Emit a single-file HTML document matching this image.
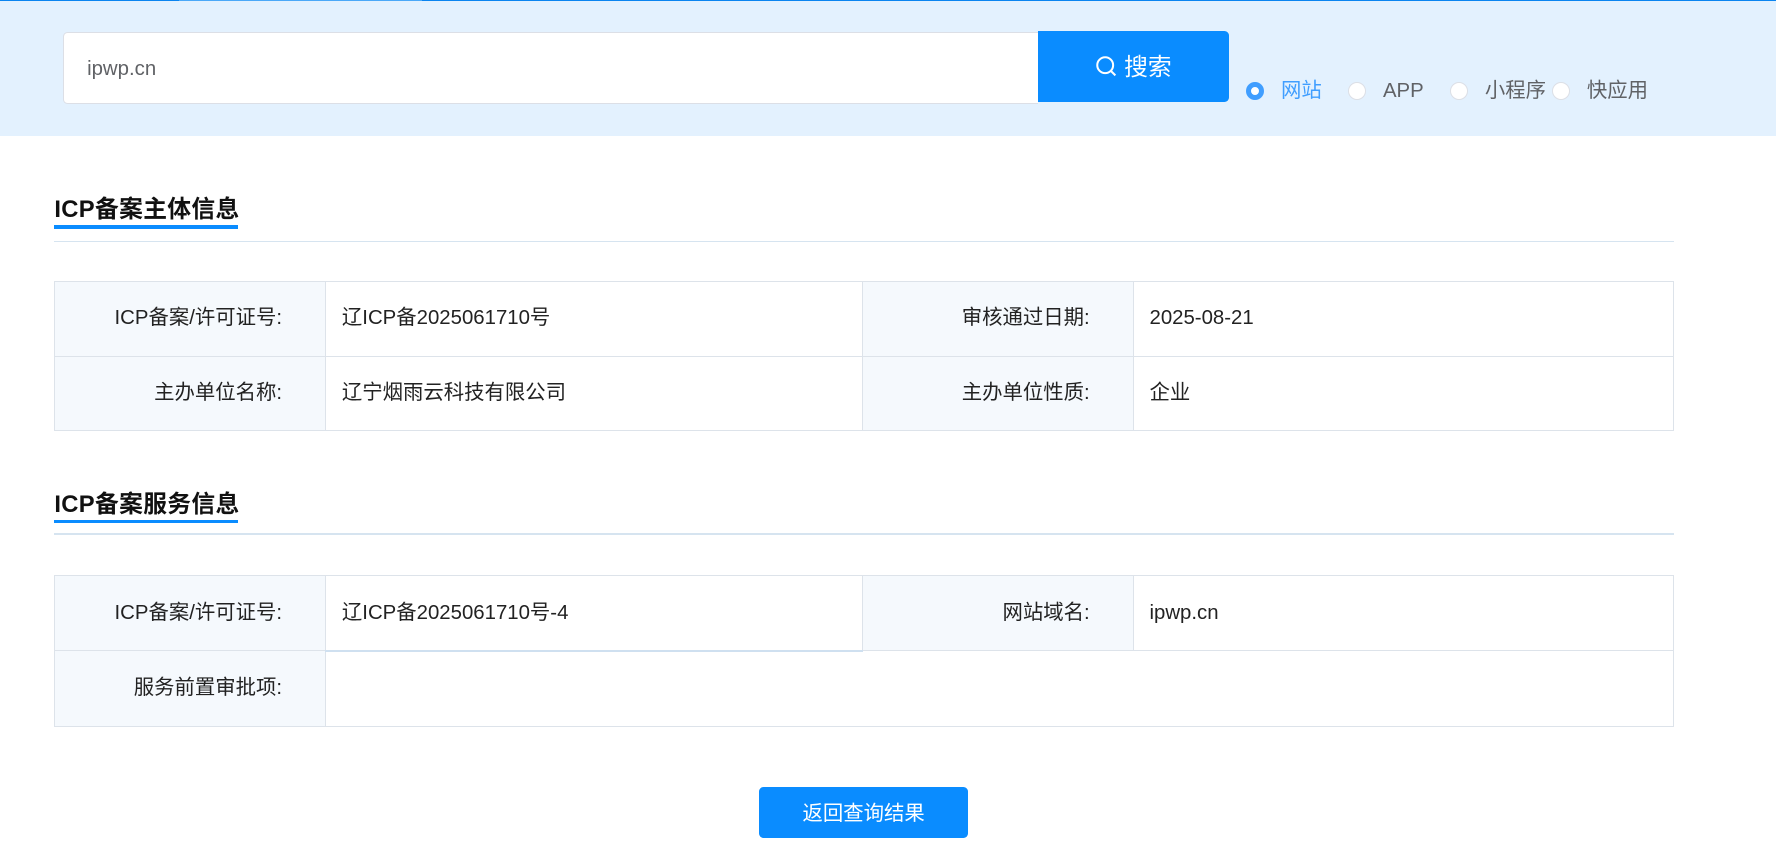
<!DOCTYPE html>
<html><head><meta charset="utf-8"><style>
html,body{margin:0;padding:0;background:#fff;overflow:hidden}
body{width:1776px;height:867px}
#w{width:1568px;height:766px;zoom:1.13265;position:relative;font-family:"Liberation Sans","Noto Sans CJK SC",sans-serif;color:#222}
.a{position:absolute}
.hdr{left:0;top:0;width:1568px;height:120px;background:#e3f1fe}
.topl{left:0;top:0;width:1568px;height:1px;background:#0a84f0}
.inp{left:56px;top:28px;background:#fff;border:1px solid #dcdfe6;border-right:none;border-radius:4px 0 0 4px;font-size:18px;color:#606266;line-height:64px;padding-left:20px;box-sizing:border-box;width:860px;height:64px}
.btn{left:916px;top:27px;width:169px;height:63px;background:#0a8cff;border-radius:0 4px 4px 0;color:#fff;font-size:21px;line-height:66px;text-align:center}
.rad{top:72px;width:16px;height:16px;border-radius:50%;background:#fff;border:1px solid #dcdfe6;box-sizing:border-box}
.rl{top:69px;font-size:18px;color:#606266;line-height:24px}
.title{left:48px;font-size:21px;font-weight:bold;color:#111;letter-spacing:0.3px}
.ul{left:48px;width:162px;height:3px;background:#0a8cff}
.ln{left:48px;width:1430px;height:1px;background:#d6e4f0}
table{position:absolute;left:48px;width:1430px;border-collapse:collapse;font-size:18px;table-layout:fixed}
td{border:1px solid #dde3ea;height:65px;padding:0 14px;color:#222;line-height:22px;vertical-align:middle}
td.l{background:#f5f9fd;text-align:right;padding-right:38px}
.back{left:670px;top:695px;width:185px;height:45px;background:#0a8cff;border-radius:4px;color:#fff;font-size:18px;line-height:49px;text-align:center}
</style></head><body><div id="w">
<div class="a hdr"></div><div class="a topl"></div>
<div class="a" style="left:158px;top:0;width:215px;height:1px;background:#4aa8f8"></div>
<div class="a inp">ipwp.cn</div>
<div class="a btn"><svg width="20" height="20" viewBox="0 0 20 20" style="vertical-align:-3px;margin-right:6px"><circle cx="9" cy="9" r="7" fill="none" stroke="#fff" stroke-width="1.8"/><path d="M14 14l4 4" stroke="#fff" stroke-width="1.8"/></svg>搜索</div>
<div class="a rad" style="left:1100px;border:5px solid #409eff"></div><div class="a rl" style="left:1131px;color:#409eff">网站</div>
<div class="a rad" style="left:1190px"></div><div class="a rl" style="left:1221px">APP</div>
<div class="a rad" style="left:1280px"></div><div class="a rl" style="left:1311px">小程序</div>
<div class="a rad" style="left:1370px"></div><div class="a rl" style="left:1401px">快应用</div>

<div class="a title" style="top:167px">ICP备案主体信息</div>
<div class="a ul" style="top:199px"></div><div class="a ln" style="top:213px"></div>
<table style="top:248px"><colgroup><col style="width:239px"><col style="width:474px"><col style="width:239px"><col></colgroup>
<tr><td class="l">ICP备案/许可证号:</td><td>辽ICP备2025061710号</td><td class="l">审核通过日期:</td><td>2025-08-21</td></tr>
<tr><td class="l">主办单位名称:</td><td>辽宁烟雨云科技有限公司</td><td class="l">主办单位性质:</td><td>企业</td></tr></table>

<div class="a title" style="top:427px">ICP备案服务信息</div>
<div class="a ul" style="top:459px"></div><div class="a ln" style="top:471px"></div>
<table style="top:508px"><colgroup><col style="width:239px"><col style="width:474px"><col style="width:239px"><col></colgroup>
<tr><td class="l">ICP备案/许可证号:</td><td style="border-bottom:2px solid #cfe0f0">辽ICP备2025061710号-4</td><td class="l">网站域名:</td><td>ipwp.cn</td></tr>
<tr><td class="l">服务前置审批项:</td><td colspan="3"></td></tr></table>

<div class="a back">返回查询结果</div>
</div></body></html>
